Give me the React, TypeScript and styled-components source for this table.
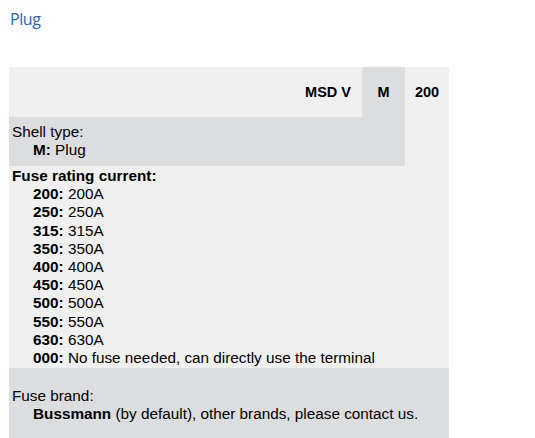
import React from "react";
import styled, { createGlobalStyle } from "styled-components";

const Global = createGlobalStyle`
  html, body { margin: 0; padding: 0; background: #ffffff; }
  body { font-family: "Liberation Sans", Arial, sans-serif; }
`;

const Page = styled.div`
  padding: 7px 0 0 9px;
  width: 440px;
`;

const Title = styled.h2`
  margin: 0 0 0 1px;
  font-family: "Open Sans", "Noto Sans", sans-serif;
  font-weight: 400;
  font-size: 16px;
  line-height: 24px;
  color: #2f62b5;
  letter-spacing: -0.4px;
`;

const Table = styled.table`
  margin-top: 36px;
  width: 440px;
  border-collapse: collapse;
  border-spacing: 0;
  background: #f0f0f0;
  table-layout: fixed;
  font-family: "Liberation Sans", Arial, sans-serif;
  font-size: 15.3px;
  line-height: 18.2px;
  color: #000;
`;

const HeadCell = styled.td<{ $align?: string; $shade?: boolean; $w: number }>`
  width: ${(p) => p.$w}px;
  height: 50px;
  padding: 0 ${(p) => (p.$align === "right" ? "11px" : "0")} 0 0;
  text-align: ${(p) => p.$align || "center"};
  vertical-align: middle;
  font-weight: 700;
  font-size: 14.5px;
  background: ${(p) => (p.$shade ? "#dcdddf" : "transparent")};
  box-sizing: border-box;
`;

const Cell = styled.td<{ $shade?: boolean; $h?: number; $top?: number }>`
  padding: ${(p) => p.$top ?? 1}px 0 1px 3px;
  height: ${(p) => (p.$h ? `${p.$h}px` : "auto")};
  background: ${(p) => (p.$shade ? "#dcdddf" : "transparent")};
  vertical-align: ${(p) => (p.$h ? "middle" : "top")};
  box-sizing: border-box;
`;

const Label = styled.div<{ $bold?: boolean }>`
  font-weight: ${(p) => (p.$bold ? 700 : 400)};
`;

const Item = styled.div`
  padding-left: 21px;
  white-space: nowrap;
`;

const Key = styled.b`
  font-weight: 700;
`;

const ratings: [string, string][] = [
  ["200", "200A"],
  ["250", "250A"],
  ["315", "315A"],
  ["350", "350A"],
  ["400", "400A"],
  ["450", "450A"],
  ["500", "500A"],
  ["550", "550A"],
  ["630", "630A"],
  ["000", "No fuse needed, can directly use the terminal"],
];

export default function App() {
  return (
    <>
      <Global />
      <Page>
        <Title>Plug</Title>
        <Table>
          <tbody>
            <tr>
              <HeadCell $align="right" $w={353}>MSD V</HeadCell>
              <HeadCell $shade $w={43}>M</HeadCell>
              <HeadCell $w={44}>200</HeadCell>
            </tr>
            <tr>
              <Cell colSpan={2} $shade $h={49} $top={0}>
                <Label>Shell type:</Label>
                <Item>
                  <Key>M:</Key> Plug
                </Item>
              </Cell>
              <Cell />
            </tr>
            <tr>
              <Cell colSpan={3}>
                <Label $bold>Fuse rating current:</Label>
                {ratings.map(([k, v]) => (
                  <Item key={k}>
                    <Key>{k}:</Key> {v}
                  </Item>
                ))}
              </Cell>
            </tr>
            <tr>
              <Cell colSpan={3} $shade $top={19}>
                <Label>Fuse brand:</Label>
                <Item>
                  <Key>Bussmann</Key> (by default), other brands, please contact us.
                </Item>
                <Item>&nbsp;</Item>
              </Cell>
            </tr>
          </tbody>
        </Table>
      </Page>
    </>
  );
}
